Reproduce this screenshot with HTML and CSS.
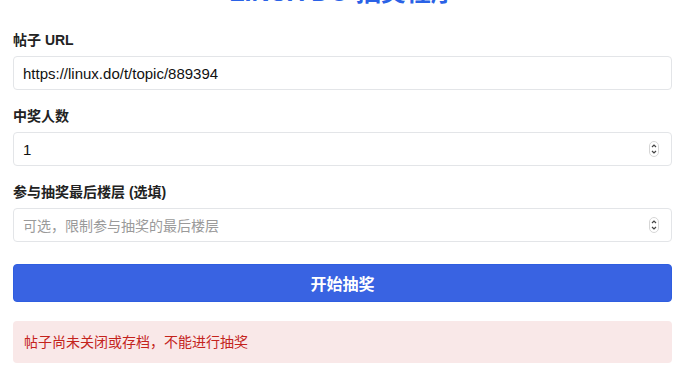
FILE: index.html
```html
<!DOCTYPE html>
<html lang="zh-CN">
<head>
    <meta charset="UTF-8">
    <meta name="viewport" content="width=device-width, initial-scale=1.0">
    <title>LINUX DO 抽奖程序</title>
    <link rel="stylesheet" href="styles.css">
</head>
<body>
    <div class="container">
        <h1>LINUX DO 抽奖程序</h1>
        <form class="form">
            <div class="field">
                <label for="url">帖子 URL</label>
                <input class="input" id="url" type="text" value="https://linux.do/t/topic/889394">
            </div>
            <div class="field">
                <label for="winners">中奖人数</label>
                <div class="number-wrap">
                    <input class="input" id="winners" type="number" value="1">
                    <svg class="spin" width="10" height="16" viewBox="0 0 10 16">
                        <rect x="0.5" y="0.5" width="9" height="15" rx="4.5" fill="#fff" stroke="#d6d6d6"/>
                        <path d="M3 6 L5 4 L7 6" fill="none" stroke="#444" stroke-width="1.2"/>
                        <path d="M3 10 L5 12 L7 10" fill="none" stroke="#444" stroke-width="1.2"/>
                    </svg>
                </div>
            </div>
            <div class="field">
                <label for="floor">参与抽奖最后楼层 (选填)</label>
                <div class="number-wrap">
                    <input class="input" id="floor" type="number" placeholder="可选，限制参与抽奖的最后楼层">
                    <svg class="spin" width="10" height="16" viewBox="0 0 10 16">
                        <rect x="0.5" y="0.5" width="9" height="15" rx="4.5" fill="#fff" stroke="#d6d6d6"/>
                        <path d="M3 6 L5 4 L7 6" fill="none" stroke="#444" stroke-width="1.2"/>
                        <path d="M3 10 L5 12 L7 10" fill="none" stroke="#444" stroke-width="1.2"/>
                    </svg>
                </div>
            </div>
            <button class="btn" type="button">开始抽奖</button>
        </form>
        <div class="error">帖子尚未关闭或存档，不能进行抽奖</div>
    </div>
</body>
</html>
```

FILE: styles.css
```css
body {
    margin: 0;
    font-family: "Liberation Sans", "Noto Sans CJK SC", sans-serif;
    color: #222;
    background: #fff;
}

.container {
    width: 659px;
    margin-left: 13px;
}

h1 {
    margin: -23px 0 0;
    height: 30px;
    line-height: 30px;
    font-size: 25px;
    text-align: center;
    color: #2a62e6;
}

.form {
    margin-top: 23px;
}

.field {
    display: flex;
    flex-direction: column;
    gap: 6px;
    margin-bottom: 16px;
}

.field label {
    font-size: 14px;
    font-weight: bold;
    line-height: 20px;
    color: #222;
}

.number-wrap {
    position: relative;
    display: flex;
    flex-direction: column;
}

.spin {
    position: absolute;
    right: 13px;
    top: 9px;
}

.input {
    box-sizing: border-box;
    height: 34px;
    padding: 0 9px;
    border: 1px solid #e3e5e8;
    border-radius: 4px;
    font-family: inherit;
    font-size: 15px;
    color: #111;
    outline: none;
}

.input::-webkit-inner-spin-button,
.input::-webkit-outer-spin-button {
    -webkit-appearance: none;
    margin: 0;
}

.input::placeholder {
    color: #9a9a9a;
    font-size: 14px;
}

.btn {
    display: block;
    width: 100%;
    height: 38px;
    margin-top: 22px;
    border: 1px solid #2f5ee0;
    border-radius: 4px;
    background: #3963e2;
    color: #fff;
    font-family: inherit;
    font-size: 16px;
    font-weight: bold;
    cursor: pointer;
}

.error {
    margin-top: 19px;
    height: 42px;
    line-height: 42px;
    padding: 0 11px;
    border-radius: 4px;
    background: #f9e8e8;
    color: #c4231c;
    font-size: 14px;
}
```
